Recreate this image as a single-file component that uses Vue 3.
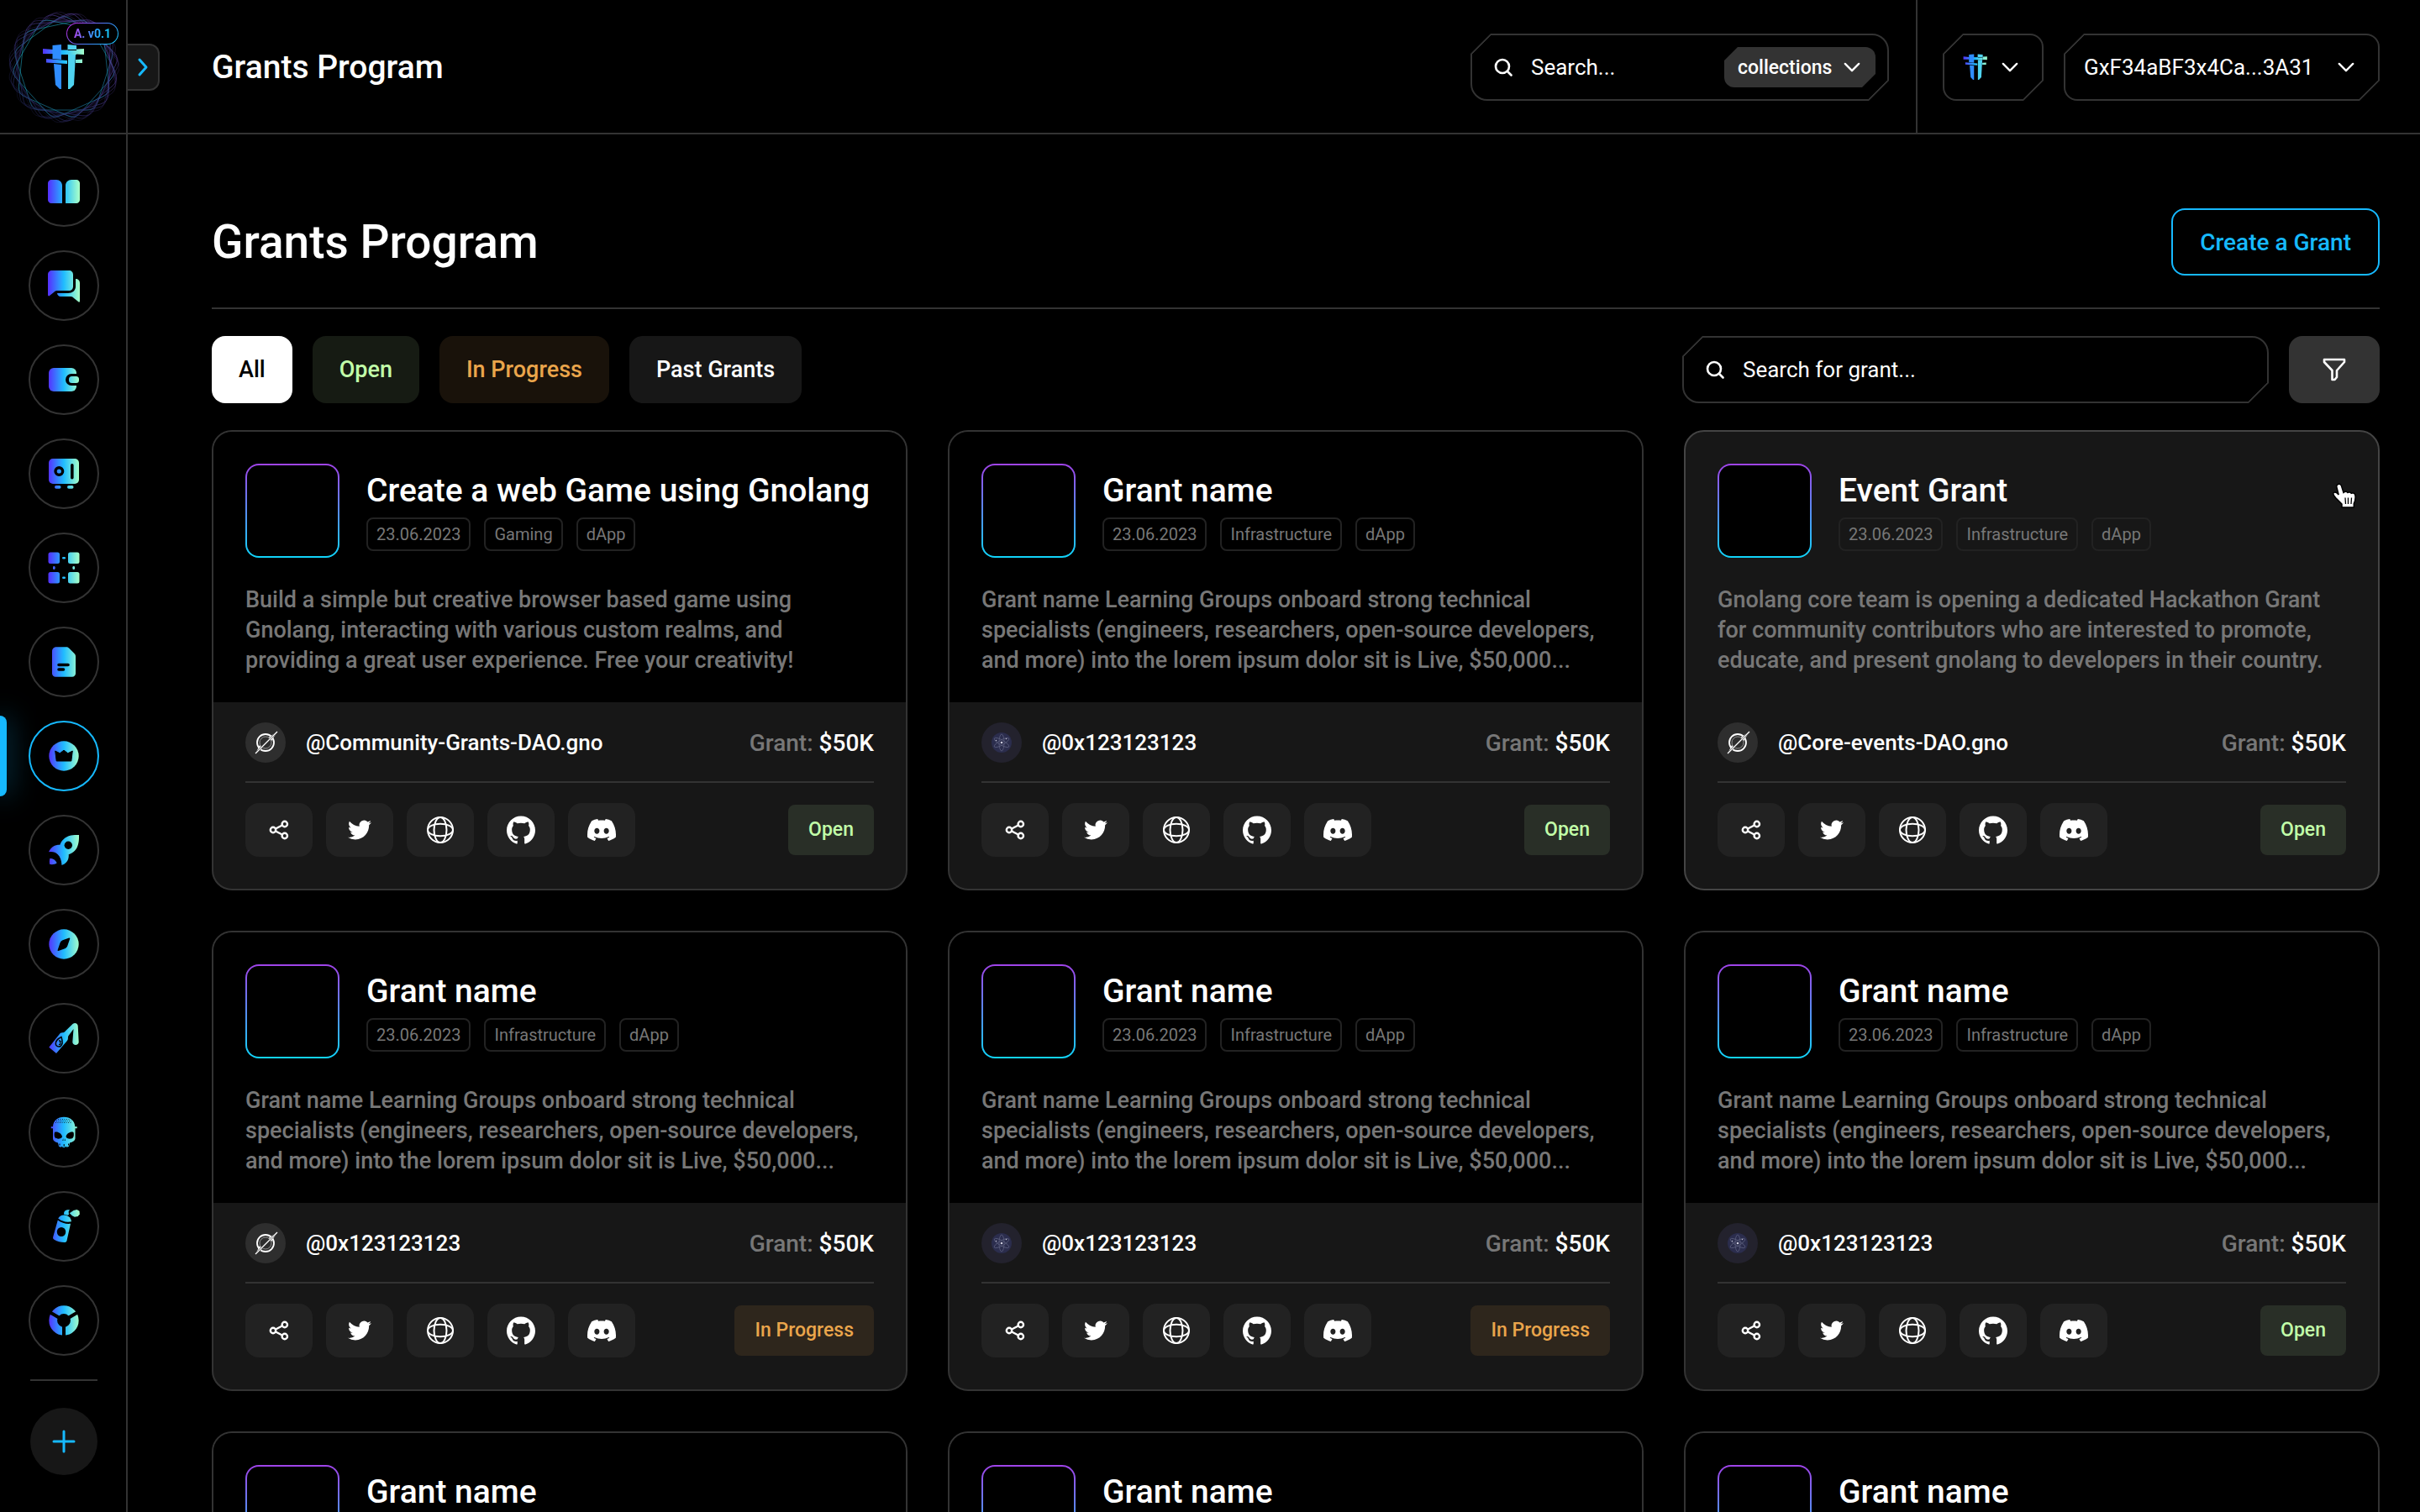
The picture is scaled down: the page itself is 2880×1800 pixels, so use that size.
<script setup>
import { ref } from 'vue'

const navItems = ['Library', 'Messages', 'Wallet', 'Vault', 'Organizations', 'Documents', 'Grants', 'Launchpad', 'Explore', 'Riot', 'Skulls', 'Graffiti', 'Browser']
const activeItem = ref('Grants')

const filters = [
  { label: 'All', tone: 'all' },
  { label: 'Open', tone: 'open' },
  { label: 'In Progress', tone: 'progress' },
  { label: 'Past Grants', tone: 'past' },
]

const lorem = 'Grant name Learning Groups onboard strong technical\nspecialists (engineers, researchers, open-source developers,\nand more) into the lorem ipsum dolor sit is Live, $50,000...'

function grant(overrides) {
  return {
    title: 'Grant name',
    tags: ['23.06.2023', 'Infrastructure', 'dApp'],
    text: lorem,
    owner: '@0x123123123',
    avatar: 'cosmos',
    status: 'Open',
    hovered: false,
    ...overrides,
  }
}

const grants = [
  grant({
    title: 'Create a web Game using Gnolang',
    tags: ['23.06.2023', 'Gaming', 'dApp'],
    text: 'Build a simple but creative browser based game using\nGnolang, interacting with various custom realms, and\nproviding a great user experience. Free your creativity!',
    owner: '@Community-Grants-DAO.gno',
    avatar: 'gno',
  }),
  grant({}),
  grant({
    title: 'Event Grant',
    text: 'Gnolang core team is opening a dedicated Hackathon Grant\nfor community contributors who are interested to promote,\neducate, and present gnolang to developers in their country.',
    owner: '@Core-events-DAO.gno',
    avatar: 'gno',
    hovered: true,
  }),
  grant({ avatar: 'gno', status: 'In Progress' }),
  grant({ status: 'In Progress' }),
  grant({}),
  grant({ avatar: 'gno' }),
  grant({}),
  grant({}),
]

/* Pentagon outline with softened corners, centred on 66,66 */
function ringPath(radius, turn) {
  const pts = Array.from({ length: 5 }, (_, i) => {
    const a = ((i * 72 + turn - 90) * Math.PI) / 180
    return [66 + radius * Math.cos(a), 66 + radius * Math.sin(a)]
  })
  const mix = (p, q, t) => `${(p[0] + (q[0] - p[0]) * t).toFixed(1)} ${(p[1] + (q[1] - p[1]) * t).toFixed(1)}`
  return pts
    .map((p, i) => {
      const prev = pts[(i + 4) % 5]
      const next = pts[(i + 1) % 5]
      return `${i ? 'L' : 'M'}${mix(p, prev, 0.12)}Q${p[0].toFixed(1)} ${p[1].toFixed(1)} ${mix(p, next, 0.12)}`
    })
    .join('') + 'Z'
}
const rings = [0, 24, 48].flatMap((turn) => [
  { d: ringPath(63, turn), color: 'url(#ring-cool)', opacity: 0.6 },
  { d: ringPath(67, turn + 8), color: 'url(#ring-warm)', opacity: 0.7 },
  { d: ringPath(68, turn + 13), color: 'url(#ring-warm)', opacity: 0.5 },
  { d: ringPath(69, turn + 18), color: 'url(#ring-warm)', opacity: 0.3 },
])
</script>

<template>
  <div class="app">
    <svg class="defs" aria-hidden="true">
      <defs>
        <linearGradient id="brand" gradientUnits="userSpaceOnUse" x1="2" y1="0" x2="38" y2="0">
          <stop offset="0" stop-color="#5433ff" /><stop offset=".5" stop-color="#20bdff" /><stop offset="1" stop-color="#a5feca" />
        </linearGradient>
        <linearGradient id="ring-cool" x1="0" y1="0" x2="1" y2="1">
          <stop offset="0" stop-color="#1ba6b8" /><stop offset="1" stop-color="#1f7fae" />
        </linearGradient>
        <linearGradient id="ring-warm" x1="0" y1="1" x2="1" y2="0">
          <stop offset="0" stop-color="#1b2350" /><stop offset="1" stop-color="#5b3c9c" />
        </linearGradient>
        <linearGradient id="beam" gradientUnits="userSpaceOnUse" x1="1" y1="0" x2="50" y2="0">
          <stop offset="0" stop-color="#5433ff" /><stop offset=".5" stop-color="#20bdff" /><stop offset="1" stop-color="#a5feca" />
        </linearGradient>
        <symbol id="mark" viewBox="0 0 52 56">
          <path fill="url(#beam)" d="M1 6l12 1v5L1 12zM22 7.500h9v5h-9zM41 6.500l9-.5v7l-9-.500zM5 18l25 2v4L5 22.500zM40 19l8-.5v4.500h-8z" />
          <path fill="#2f8dff" d="M12.500 2 23 1v18l-10.500-1z" />
          <path fill="#2f8dff" d="m14 24 9 1v29h-2l-5-5z" />
          <path fill="#4fd3f0" d="M30.500 1 41 2v5H30.500z" />
          <path fill="#4fd3f0" d="M31 13h9l-2 36-5 5h-2z" />
          <path fill="url(#beam)" d="M22 8h19v5H22z" />
        </symbol>
      </defs>
    </svg>

    <aside class="sidebar">
      <div class="brand">
        <a href="#" class="brand-link" aria-label="Home">
          <svg class="rings" viewBox="0 0 132 132" aria-hidden="true">
            <path v-for="(r, i) in rings" :key="i" :d="r.d" :stroke="r.color" :opacity="r.opacity" fill="none" />
          </svg>
          <svg class="logo" viewBox="0 0 52 56" aria-hidden="true"><use href="#mark" /></svg>
        </a>
        <span class="version"><span>A. v0.1</span></span>
        <button class="expand" type="button" aria-label="Expand menu">
          <svg width="14" height="24" viewBox="0 0 14 24" fill="none" stroke="#16b9ff" stroke-width="3" stroke-linecap="round" stroke-linejoin="round"><path d="m3 3 8 9-8 9" /></svg>
        </button>
      </div>

      <nav class="nav">
        <a v-for="item in navItems" :key="item" href="#" class="nav-item" :class="{ active: item === activeItem }" :aria-label="item">
          <svg viewBox="0 0 40 40" fill="url(#brand)" aria-hidden="true">
            <template v-if="item === 'Library'">
              <path d="M5 6h6c4 0 7 3 7 7v21H5c-2 0-4-2-4-4V10c0-2 2-4 4-4zM35 6h-6c-4 0-7 3-7 7v21h13c2 0 4-2 4-4V10c0-2-2-4-4-4z" />
            </template>
            <template v-else-if="item === 'Messages'">
              <path d="M1 7c0-3 2-5 5-5h20c3 0 5 2 5 5v14c0 3-2 5-5 5H13c-2 0-3 0-5 2l-5 4c-1 1-2 0-2-1z" />
              <path d="M34 12c3 0 5 2 5 5v21c0 2-1 2-2 1l-5-4c-2-2-3-2-5-2H16c-2 0-4-2-4-4h13c5 0 9-3 9-8z" />
            </template>
            <template v-else-if="item === 'Wallet'">
              <rect x="2" y="6" width="33" height="28" rx="6" />
              <path d="M40 13H29a7 7 0 0 0 0 14h11z" fill="#000" />
              <rect x="26" y="16" width="12" height="8" rx="3.500" />
            </template>
            <template v-else-if="item === 'Vault'">
              <rect x="2" y="2" width="36" height="30" rx="5" />
              <circle cx="14.300" cy="17" r="4.300" fill="none" stroke="#000" stroke-width="3.400" />
              <rect x="28" y="8" width="3.600" height="18.500" rx="1.800" fill="#000" />
              <rect x="9" y="34" width="7.500" height="3.700" rx="1.800" /><rect x="24" y="34" width="7.500" height="3.700" rx="1.800" />
            </template>
            <template v-else-if="item === 'Organizations'">
              <rect x="1.500" y="1.500" width="13.500" height="13.500" rx="2.500" /><rect x="25" y="1.500" width="13.500" height="13.500" rx="2.500" />
              <rect x="1.500" y="25" width="13.500" height="13.500" rx="2.500" /><rect x="25" y="25" width="13.500" height="13.500" rx="2.500" />
              <rect x="18" y="7" width="4" height="2.600" rx="1.300" /><rect x="18" y="30.400" width="4" height="2.600" rx="1.300" />
              <rect x="7" y="18" width="2.600" height="4" rx="1.300" /><rect x="30.400" y="18" width="2.600" height="4" rx="1.300" />
            </template>
            <template v-else-if="item === 'Documents'">
              <path d="M11 2.300h12c1.200 0 2 .4 3 1.200l6.500 6.500c.9 1 1.500 2 1.500 3.500v20c0 2.500-1.700 4.200-4.200 4.200H10.200C7.700 37.700 6 36 6 33.500v-26C6 4.500 8 2.300 11 2.300z" />
              <path d="M14 23.500h11M14 29h5.500" stroke="#000" stroke-width="3.600" stroke-linecap="round" />
            </template>
            <template v-else-if="item === 'Grants'">
              <circle cx="20" cy="20" r="17.700" />
              <path d="m9.700 14 5.600 2.800L17.500 15l2.500-1.800 2.500 1.800 2.200 1.800 5.600-2.800-1.500 12H11.200z" fill="#000" stroke="#000" stroke-linejoin="round" />
            </template>
            <template v-else-if="item === 'Launchpad'">
              <path d="M38 2c-8-.3-13.800.6-18.500 5.200-2.200 2.100-3.500 4.400-4.200 6.500C9.500 13.600 4.600 16 2 22.300c4.700-.6 8 .2 10.800 3 2.900 2.800 4.300 6.700 4.700 12.700 5-1.500 8.900-6.500 8.200-12.700 2.400-.7 5.200-2.200 7.300-4.500C37 16.500 38.300 10 38 2z" />
              <circle cx="25.300" cy="14.300" r="4.700" fill="#000" />
              <path d="M3.500 29.700c3.700.2 6.500 2 8.200 5.500-2.200 1.800-5 2.200-8.400 1.800-.6-2.500-.5-5 .2-7.300z" />
            </template>
            <template v-else-if="item === 'Explore'">
              <circle cx="20" cy="20" r="17.700" />
              <path d="M26.500 13.200 23.500 22c-.6 1.600-1.200 2-2.500 2.600l-7.700 2.600 3-8.700c.5-1.500 1-2 2.500-2.600z" fill="#000" stroke="#000" stroke-width="1.500" stroke-linejoin="round" />
            </template>
            <template v-else-if="item === 'Riot'">
              <path d="M2.300 30.700 14.500 15.500c1-1.400 2-2.300 3.800-2.300 1.700 0 2.600-.6 3.700-2L30.500 3c2.600-2 5.500-1 6.200 2l1 19.500c0 4.500-7.400 4.500-7.400 0L31.500 9l-6 8c-.8 1.200-.5 2.400-.6 3.500 0 1-.4 1.700-1 2.500L11 38z" />
              <path d="M17 18.500c-4 2-7.200 4.800-6.700 8.500.3 2.300 3.400 3.800 5.700 2.500 2.600-1.700 2.800-5.500 1-11z" fill="none" stroke="#000" stroke-width="1.500" />
              <path d="M14 23c2 0 3 1 1.500 2.500 1.200 1 0 2.500-1.500 2" fill="none" stroke="#000" stroke-width="1.300" />
            </template>
            <template v-else-if="item === 'Skulls'">
              <path d="M20 1.700c7.500 0 13 4.600 13.300 11.600h2.400v2h-2.200V27c0 3-2.800 4.500-6.500 5.500l-1 4.300-2.400 1-1.200-1-1.400 1.200h-2l-1.400-1.200-1.200 1-2.400-1-1-4.300C9.300 31.500 7 30 7 27V15.300H4.800v-2h2.200C7.300 6.300 12.500 1.700 20 1.700z" />
              <path d="M9 20c3-1.500 8 1 9 5-.3 3-6.500 3.500-8.300 1.500C8.500 25 8.300 22 9 20zM31.500 20c-3-1.500-8 1-9 5 .3 3 6.500 3.500 8.300 1.500 1.200-1.500 1.400-4.500.7-6.500zM19.200 27l-.8 3h1zM21 27l.8 3h-1z" fill="#000" />
              <path d="M15 33.500v2M20.200 34v3M25.500 33.500v2" stroke="#000" />
              <path d="M13 4.500h14M11 6.500h18M10 8.500h20" stroke="#000" stroke-dasharray="1 1.500" opacity=".7" />
            </template>
            <template v-else-if="item === 'Graffiti'">
              <path d="M12.800 12.500c4.600 3.600 9.500 4.700 15.200 4.300L23.500 37c-.3 1.500-1.500 2-3 2-4.200-.1-8.300-1-12-3.300C7.200 35 6.800 34 7.200 32.500z" />
              <path d="M13.200 10.500c2-3.300 5-4.600 9-3.700 4 1 6.300 3.500 6.800 7.400-5.600 1.300-11.600-.1-15.800-3.700z" />
              <path d="M20 5.500c0-4 2-5.500 7-5.200l-1.400 2L26 6l-1.800.8z" />
              <path d="M26.800 4.200 31.500 1l4-1 3 1.800.3 3.400-2 2.800-4 .8-3-1.500z" />
              <ellipse cx="17" cy="26.500" rx="5.200" ry="5.600" fill="#000" />
            </template>
            <template v-else>
              <circle cx="20" cy="20" r="12.800" fill="none" stroke="url(#brand)" stroke-width="9.700" />
              <path d="M20 20v19M20 20 3 10M20 20l17-10" stroke="#000" stroke-width="4" />
            </template>
          </svg>
        </a>
      </nav>
      <hr class="nav-rule" />
      <button class="add" type="button" aria-label="Add app">
        <svg width="28" height="28" viewBox="0 0 28 28" fill="none" stroke="#16b9ff" stroke-width="3" stroke-linecap="round"><path d="M14 2v24M2 14h24" /></svg>
      </button>
    </aside>

    <div class="page">
      <header class="topbar">
        <p class="topbar-title">Grants Program</p>
        <div class="cut search-box">
          <svg class="search-icon" viewBox="0 0 22 22" aria-hidden="true"><circle cx="10" cy="10" r="8" /><path d="m16 16 4.500 4.500" /></svg>
          <input type="text" placeholder="Search..." aria-label="Search" />
          <div class="picker scope">
            <select aria-label="Search scope"><option>collections</option></select>
            <svg class="chevron" viewBox="0 0 22 14" aria-hidden="true"><path d="m2 2 9 9 9-9" /></svg>
          </div>
        </div>
        <div class="account">
          <button class="cut network" type="button" aria-label="Network">
            <svg width="30" height="34" viewBox="0 0 52 56" aria-hidden="true"><use href="#mark" /></svg>
            <svg class="chevron" viewBox="0 0 22 14" aria-hidden="true"><path d="m2 2 9 9 9-9" /></svg>
          </button>
          <div class="cut picker wallet">
            <select aria-label="Wallet"><option>GxF34aBF3x4Ca...3A31</option></select>
            <svg class="chevron" viewBox="0 0 22 14" aria-hidden="true"><path d="m2 2 9 9 9-9" /></svg>
          </div>
        </div>
      </header>

      <main class="content">
        <div class="heading">
          <h1>Grants Program</h1>
          <button class="create" type="button">Create a Grant</button>
        </div>

        <div class="toolbar">
          <button v-for="f in filters" :key="f.label" type="button" class="filter" :class="f.tone">{{ f.label }}</button>
          <div class="cut grant-search">
            <svg class="search-icon" viewBox="0 0 22 22" aria-hidden="true"><circle cx="10" cy="10" r="8" /><path d="m16 16 4.500 4.500" /></svg>
            <input type="text" placeholder="Search for grant..." aria-label="Search for grant" />
          </div>
          <button class="funnel" type="button" aria-label="Filters">
            <svg width="30" height="30" viewBox="0 0 30 30" fill="none" stroke="#fff" stroke-width="2.600" stroke-linejoin="round"><path d="M3 3h24v3l-9 10v8l-2.500 3H12.500V16L3 6z" /></svg>
          </button>
        </div>

        <section class="grid">
          <article v-for="(g, i) in grants" :key="i" class="card" :class="{ hovered: g.hovered }">
            <div class="card-head">
              <div class="summary">
                <div class="thumb"></div>
                <div class="summary-text">
                  <h2>{{ g.title }}</h2>
                  <ul class="tags"><li v-for="t in g.tags" :key="t">{{ t }}</li></ul>
                </div>
              </div>
              <p class="description">{{ g.text }}</p>
            </div>
            <div class="card-foot">
              <div class="owner">
                <svg v-if="g.avatar === 'gno'" class="avatar" viewBox="0 0 48 48" aria-hidden="true">
                  <circle cx="24" cy="24" r="24" fill="#2e2e2e" />
                  <circle cx="24" cy="24" r="10" fill="none" stroke="#fff" stroke-width="1.800" />
                  <circle cx="24" cy="24" r="7" fill="none" stroke="#aaa" stroke-width=".8" />
                  <path d="M38 11 31 22l-3.500-4zM12 37l5-10 3 4z" fill="#fff" />
                  <path d="M37 12 12 37" stroke="#2e2e2e" stroke-width="2.400" />
                  <path d="M38 11 12 37" stroke="#fff" stroke-width="1.200" />
                </svg>
                <svg v-else class="avatar" viewBox="0 0 48 48" fill="none" aria-hidden="true">
                  <circle cx="24" cy="24" r="24" fill="#23222d" />
                  <circle cx="24" cy="24" r="12" fill="#2b2d4d" />
                  <g stroke="#5a5d7c" stroke-width=".8">
                    <ellipse cx="24" cy="24" rx="3" ry="10" />
                    <ellipse cx="24" cy="24" rx="3" ry="10" transform="rotate(60 24 24)" />
                    <ellipse cx="24" cy="24" rx="3" ry="10" transform="rotate(120 24 24)" />
                  </g>
                  <circle cx="24" cy="24" r="1.300" fill="#ccd" /><circle cx="17.500" cy="21.500" r=".8" fill="#bbc" /><circle cx="29.500" cy="19.500" r=".8" fill="#bbc" />
                </svg>
                <span class="owner-name">{{ g.owner }}</span>
                <span class="amount"><span class="amount-label">Grant:</span> $50K</span>
              </div>
              <div class="actions">
                <a href="#" aria-label="Share">
                  <svg width="24" height="24" viewBox="0 0 24 24" fill="none" stroke="#fff" stroke-width="2.400"><circle cx="5" cy="12" r="3.200" /><circle cx="18.800" cy="5" r="3.200" /><circle cx="18.800" cy="19" r="3.200" /><path d="m8 10.500 7.800-4M8 13.500l7.800 4" /></svg>
                </a>
                <a href="#" aria-label="Twitter">
                  <svg width="28" height="28" viewBox="0 0 24 24" fill="#fff"><path d="M23.953 4.57a10 10 0 01-2.825.775 4.958 4.958 0 002.163-2.723c-.951.555-2.005.959-3.127 1.184a4.92 4.92 0 00-8.384 4.482C7.69 8.095 4.067 6.13 1.64 3.162a4.822 4.822 0 00-.666 2.475c0 1.71.87 3.213 2.188 4.096a4.904 4.904 0 01-2.228-.616v.06a4.923 4.923 0 003.946 4.827 4.996 4.996 0 01-2.212.085 4.936 4.936 0 004.604 3.417 9.867 9.867 0 01-6.102 2.105c-.39 0-.779-.023-1.17-.067a13.995 13.995 0 007.557 2.209c9.053 0 13.998-7.496 13.998-13.985 0-.21 0-.42-.015-.63A9.935 9.935 0 0024 4.59z" /></svg>
                </a>
                <a href="#" aria-label="Website">
                  <svg width="32" height="32" viewBox="0 0 32 32" fill="none" stroke="#fff" stroke-width="2"><circle cx="16" cy="16" r="15" /><ellipse cx="16" cy="16" rx="7.500" ry="15" /><ellipse cx="16" cy="16" rx="15" ry="7.200" /></svg>
                </a>
                <a href="#" aria-label="GitHub">
                  <svg width="34" height="34" viewBox="0 0 24 24" fill="#fff"><path d="M12 .297c-6.63 0-12 5.373-12 12 0 5.303 3.438 9.8 8.205 11.385.6.113.82-.258.82-.577 0-.285-.01-1.04-.015-2.04-3.338.724-4.042-1.61-4.042-1.61C4.422 18.07 3.633 17.7 3.633 17.7c-1.087-.744.084-.729.084-.729 1.205.084 1.838 1.236 1.838 1.236 1.07 1.835 2.809 1.305 3.495.998.108-.776.417-1.305.76-1.605-2.665-.3-5.466-1.332-5.466-5.93 0-1.31.465-2.38 1.235-3.22-.135-.303-.54-1.523.105-3.176 0 0 1.005-.322 3.3 1.23.96-.267 1.98-.399 3-.405 1.02.006 2.04.138 3 .405 2.28-1.552 3.285-1.23 3.285-1.23.645 1.653.24 2.873.12 3.176.765.84 1.23 1.91 1.23 3.22 0 4.61-2.805 5.625-5.475 5.92.42.36.81 1.096.81 2.22 0 1.606-.015 2.896-.015 3.286 0 .315.21.69.825.57C20.565 22.092 24 17.592 24 12.297c0-6.627-5.373-12-12-12" /></svg>
                </a>
                <a href="#" aria-label="Discord">
                  <svg width="34" height="34" viewBox="0 0 24 24" fill="#fff"><path d="M20.317 4.3698a19.7913 19.7913 0 00-4.8851-1.5152.0741.0741 0 00-.0785.0371c-.211.3753-.4447.8648-.6083 1.2495-1.8447-.2762-3.68-.2762-5.4868 0-.1636-.3933-.4058-.8742-.6177-1.2495a.077.077 0 00-.0785-.037 19.7363 19.7363 0 00-4.8852 1.515.0699.0699 0 00-.0321.0277C.5334 9.0458-.319 13.5799.0992 18.0578a.0824.0824 0 00.0312.0561c2.0528 1.5076 4.0413 2.4228 5.9929 3.0294a.0777.0777 0 00.0842-.0276c.4616-.6304.8731-1.2952 1.226-1.9942a.076.076 0 00-.0416-.1057c-.6528-.2476-1.2743-.5495-1.8722-.8923a.077.077 0 01-.0076-.1277c.1258-.0943.2517-.1923.3718-.2914a.0743.0743 0 01.0776-.0105c3.9278 1.7933 8.18 1.7933 12.0614 0a.0739.0739 0 01.0785.0095c.1202.099.246.1981.3728.2924a.077.077 0 01-.0066.1276 12.2986 12.2986 0 01-1.873.8914.0766.0766 0 00-.0407.1067c.3604.698.7719 1.3628 1.225 1.9932a.076.076 0 00.0842.0286c1.961-.6067 3.9495-1.5219 6.0023-3.0294a.077.077 0 00.0313-.0552c.5004-5.177-.8382-9.6739-3.5485-13.6604a.061.061 0 00-.0312-.0286zM8.02 15.3312c-1.1825 0-2.1569-1.0857-2.1569-2.419 0-1.3332.9555-2.4189 2.157-2.4189 1.2108 0 2.1757 1.0952 2.1568 2.419 0 1.3332-.9555 2.4189-2.1569 2.4189zm7.9748 0c-1.1825 0-2.1569-1.0857-2.1569-2.419 0-1.3332.9554-2.4189 2.1569-2.4189 1.2108 0 2.1757 1.0952 2.1568 2.419 0 1.3332-.946 2.4189-2.1568 2.4189Z" /></svg>
                </a>
                <span class="status" :class="{ progress: g.status === 'In Progress' }">{{ g.status }}</span>
              </div>
            </div>
            <svg v-if="g.hovered" class="pointer" viewBox="0 0 32 34" aria-hidden="true">
              <path d="M8.500 2.500c2-.9 3.500.3 4 2l2.500 8 1-.8c1.600-.9 3.200-.3 4 .8 1.300-1 3.200-.7 4.200.7 1.800-.8 4.200 0 4.700 2.300.6 3.500-.2 7-1.600 10v4.500H13v-4L5.500 18.500c-1.600-2-3.700-4.800-2-6 1.500-1 4 .3 5.700 2.500L7 6.500c-.6-1.800-.3-3.300 1.500-4z" fill="#fff" stroke="#000" stroke-width="1.500" />
              <path d="M17 18.500 17.500 26M20.500 18.500V26M24.500 18.500 24 26" stroke="#000" stroke-width="1.300" />
            </svg>
          </article>
        </section>
      </main>
    </div>
  </div>
</template>

<style>
body {
  background: #000;
}
</style>

<style scoped>
.app {
  --line: #333;
  --panel: #171717;
  --accent: #16b9ff;
  display: grid;
  grid-template-columns: 152px minmax(0, 1fr);
  height: 100vh;
  overflow: hidden;
  background: #000;
  color: #fff;
  font-family: Roboto, "Noto Sans", sans-serif;
  font-size: 26px;
  font-weight: 500;
}
.app *,
.app *::before {
  box-sizing: border-box;
}
svg {
  display: block;
  flex: none;
}
h1, h2, p, ul {
  margin: 0;
  padding: 0;
}
button, input, select {
  margin: 0;
  border: 0;
  padding: 0;
  background: none;
  color: inherit;
  font: inherit;
}
.defs {
  position: absolute;
  width: 0;
  height: 0;
}

/* Sidebar */
.sidebar {
  display: flex;
  flex-direction: column;
  align-items: center;
  box-shadow: inset -2px 0 var(--line);
}
.brand {
  position: relative;
  display: flex;
  align-items: center;
  justify-content: center;
  width: 100%;
  height: 160px;
  flex: none;
  box-shadow: inset 0 -2px var(--line);
}
.brand-link {
  display: grid;
  place-items: center;
}
.rings, .logo {
  grid-area: 1 / 1;
}
.rings {
  width: 132px;
  height: 132px;
}
.logo {
  width: 52px;
  height: 56px;
}
.version {
  position: absolute;
  top: 27px;
  right: 11px;
  display: flex;
  align-items: center;
  justify-content: center;
  width: 62px;
  height: 26px;
  border: 1px solid transparent;
  border-radius: 13px;
  background: linear-gradient(#000, #000) padding-box, linear-gradient(135deg, #b431e6 10%, #3f8bff 60%, #12d6ff) border-box;
}
.version span {
  background: linear-gradient(100deg, #b040e8, #2aa6ff 60%, #12d6ff);
  background-clip: text;
  color: transparent;
  font-size: 14px;
  font-weight: 700;
  line-height: 20px;
}
.expand {
  position: absolute;
  z-index: 1;
  top: 52px;
  left: 152px;
  display: flex;
  align-items: center;
  justify-content: center;
  width: 38px;
  height: 56px;
  border: 2px solid var(--line);
  border-left: 0;
  border-radius: 0 12px 12px 0;
  background: var(--panel);
}
.nav {
  display: flex;
  flex-direction: column;
  gap: 28px;
  padding: 26px 0 28px;
}
.nav-item {
  position: relative;
  display: flex;
  align-items: center;
  justify-content: center;
  width: 84px;
  height: 84px;
  border: 2px solid var(--line);
  border-radius: 50%;
}
.nav-item svg {
  width: 40px;
  height: 40px;
  overflow: visible;
}
.nav-item.active {
  border-color: var(--accent);
}
.nav-item.active::before {
  content: "";
  position: absolute;
  left: -36px;
  width: 8px;
  height: 96px;
  border-radius: 0 8px 8px 0;
  background: var(--accent);
  box-shadow: 0 0 32px rgba(22, 185, 255, 0.6);
}
.nav-rule {
  width: 80px;
  height: 2px;
  margin: 0 0 32px;
  border: 0;
  background: var(--line);
}
.add {
  display: flex;
  align-items: center;
  justify-content: center;
  width: 80px;
  height: 80px;
  flex: none;
  border-radius: 50%;
  background: var(--panel);
}

/* Boxes with two bevelled and two rounded corners */
.cut {
  --cut: 24px;
  --edge: 19px;
  display: flex;
  align-items: center;
  height: 80px;
  border: 2px solid var(--line);
  border-radius: 0 20px;
  background:
    linear-gradient(135deg, var(--line) var(--edge), transparent var(--edge)) border-box,
    linear-gradient(-45deg, var(--line) var(--edge), transparent var(--edge)) border-box;
  clip-path: polygon(var(--cut) 0, 100% 0, 100% calc(100% - var(--cut)), calc(100% - var(--cut)) 100%, 0 100%, 0 var(--cut));
}
.search-icon, .chevron {
  fill: none;
  stroke: #fff;
  stroke-width: 2.6;
  stroke-linecap: round;
  stroke-linejoin: round;
}
.search-icon {
  width: 22px;
  height: 22px;
}
.chevron {
  width: 20px;
  height: 13px;
}
input {
  min-width: 0;
  flex: 1;
  font-weight: 400;
  outline: 0;
}
input::placeholder {
  color: #fff;
  opacity: 1;
}
select {
  width: 100%;
  height: 100%;
  appearance: none;
  outline: 0;
}
.picker {
  position: relative;
}
.picker .chevron {
  position: absolute;
  right: 18px;
  pointer-events: none;
}

/* Top bar */
.page {
  display: flex;
  flex-direction: column;
  min-height: 0;
}
.topbar {
  display: flex;
  align-items: center;
  height: 160px;
  flex: none;
  padding-left: 100px;
  box-shadow: inset 0 -2px var(--line);
}
.topbar-title {
  margin-right: auto;
  font-size: 39px;
  line-height: 48px;
}
.search-box {
  width: 498px;
  margin-right: 32px;
  padding: 0 14px 0 26px;
}
.search-box input,
.grant-search input {
  margin-left: 22px;
}
.scope {
  display: flex;
  align-items: center;
  width: 180px;
  height: 48px;
  border-radius: 0 12px;
  background: var(--line);
  clip-path: polygon(16px 0, 100% 0, 100% calc(100% - 16px), calc(100% - 16px) 100%, 0 100%, 0 16px);
}
.scope select {
  padding: 0 40px 0 16px;
  font-size: 23px;
}
.account {
  display: flex;
  align-items: center;
  gap: 24px;
  align-self: stretch;
  padding: 0 48px 0 30px;
  border-left: 2px solid var(--line);
}
.network {
  justify-content: space-between;
  width: 120px;
  padding: 0 28px 0 22px;
  border-radius: 0 16px;
}
.wallet {
  width: 376px;
  border-radius: 0 16px;
}
.wallet select {
  padding: 0 64px 0 22px;
  font-weight: 400;
}
.wallet .chevron {
  right: 28px;
}

/* Content */
.content {
  flex: 1;
  min-height: 0;
  padding: 88px 48px 48px 100px;
  overflow-y: auto;
  scrollbar-width: none;
}
.heading {
  display: flex;
  align-items: center;
  justify-content: space-between;
  padding-bottom: 38px;
  border-bottom: 2px solid var(--line);
}
h1 {
  font-size: 55px;
  font-weight: 500;
  line-height: 72px;
}
.create {
  height: 80px;
  padding: 0 32px;
  border: 2px solid var(--accent);
  border-radius: 16px;
  color: var(--accent);
  font-size: 28px;
}
.toolbar {
  display: flex;
  gap: 24px;
  margin: 32px 0;
}
.filter {
  height: 80px;
  padding: 0 32px;
  border-radius: 16px;
  background: var(--panel);
  font-size: 27px;
}
.filter.all {
  background: #fff;
  color: #000;
}
.filter.open {
  background: #161b13;
  color: #c2ffa9;
}
.filter.progress {
  background: #19120a;
  color: #eaa54b;
}
.grant-search {
  width: 698px;
  margin-left: auto;
  padding: 0 26px;
}
.funnel {
  display: flex;
  align-items: center;
  justify-content: center;
  width: 108px;
  height: 80px;
  border-radius: 16px;
  background: var(--line);
}

/* Cards */
.grid {
  display: grid;
  grid-template-columns: repeat(3, minmax(0, 1fr));
  gap: 48px;
}
.card {
  position: relative;
  overflow: hidden;
  border: 2px solid var(--line);
  border-radius: 24px;
  background: var(--panel);
}
.card-head {
  padding: 38px 38px 32px;
  background: #000;
}
.card.hovered {
  border-color: #444;
}
.card.hovered .card-head {
  background: none;
}
.summary {
  display: flex;
  gap: 32px;
}
.thumb {
  width: 112px;
  height: 112px;
  flex: none;
  border: 2px solid transparent;
  border-radius: 16px;
  background: linear-gradient(#000, #000) padding-box, linear-gradient(#a043e9, #10d5fa) border-box;
}
.summary-text {
  min-width: 0;
  padding-top: 4px;
}
h2 {
  margin-bottom: 4px;
  font-size: 39px;
  font-weight: 500;
  line-height: 56px;
  white-space: nowrap;
}
.tags {
  display: flex;
  gap: 16px;
  list-style: none;
}
.tags li {
  height: 40px;
  padding: 0 10px;
  border: 2px solid #222;
  border-radius: 8px;
  color: #777;
  font-size: 20px;
  font-weight: 400;
  line-height: 36px;
}
.description {
  margin-top: 32px;
  color: #777;
  font-size: 27px;
  line-height: 36px;
  white-space: pre;
}
.card-foot {
  padding: 24px 38px 38px;
}
.owner {
  display: flex;
  align-items: center;
  padding-bottom: 22px;
  border-bottom: 2px solid var(--line);
}
.avatar {
  width: 48px;
  height: 48px;
  margin-right: 24px;
}
.owner-name {
  margin-right: auto;
}
.amount {
  font-size: 28px;
}
.amount-label {
  color: #777;
}
.actions {
  display: flex;
  align-items: center;
  gap: 16px;
  padding-top: 24px;
}
.actions a {
  display: flex;
  align-items: center;
  justify-content: center;
  width: 80px;
  height: 64px;
  border-radius: 16px;
  background: #222;
}
.status {
  margin-left: auto;
  height: 60px;
  padding: 0 24px;
  border-radius: 8px;
  background: #292f27;
  color: #c2ffa9;
  font-size: 23px;
  line-height: 60px;
}
.status.progress {
  background: #2e261c;
  color: #eaa54b;
}
.pointer {
  position: absolute;
  top: 60px;
  right: 24px;
  width: 32px;
  height: 34px;
}
</style>
